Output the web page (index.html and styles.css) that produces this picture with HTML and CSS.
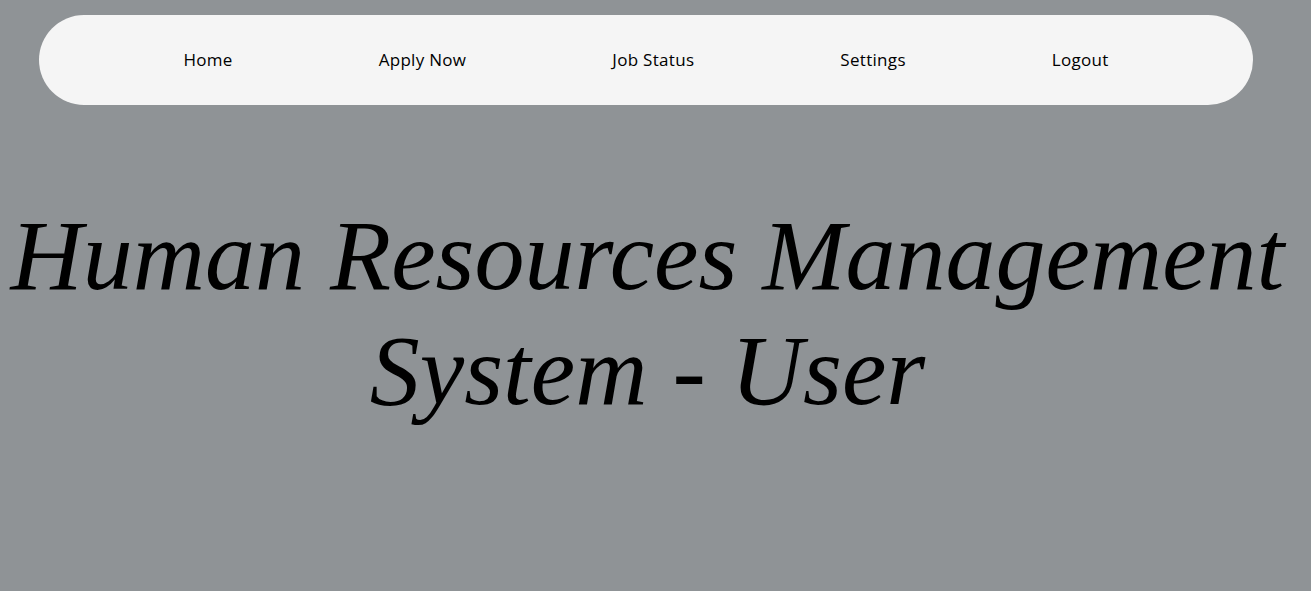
FILE: index.html
```html
<!DOCTYPE html>
<html lang="en">
<head>
<meta charset="utf-8">
<title>HRMS - User</title>
<link rel="stylesheet" href="styles.css">
</head>
<body>
<nav class="navbar">
  <a class="nav-link" href="#">Home</a>
  <a class="nav-link" href="#">Apply Now</a>
  <a class="nav-link" href="#">Job Status</a>
  <a class="nav-link" href="#">Settings</a>
  <a class="nav-link" href="#">Logout</a>
</nav>
<main class="hero">
  <h1 class="title">Human Resources Management System - User</h1>
</main>
</body>
</html>
```
FILE: styles.css
```css
html, body {
  margin: 0;
  padding: 0;
}
body {
  background: #8f9396;
  min-height: 591px;
}
.navbar {
  box-sizing: border-box;
  margin: 15px 58px 0 39px;
  height: 90px;
  padding-bottom: 2px;
  background: #f5f5f5;
  border-radius: 45px;
  display: flex;
  align-items: center;
  justify-content: center;
  gap: 146px;
}
.nav-link {
  font-family: "Open Sans", "Liberation Sans", sans-serif;
  font-size: 17px;
  letter-spacing: 0.3px;
  color: #000;
  text-decoration: none;
}
.hero {
  padding: 0 16px 0 0;
}
.title {
  margin: 93px 0 0;
  font-family: "Liberation Serif", "Times New Roman", serif;
  font-style: italic;
  font-weight: normal;
  font-size: 100px;
  line-height: 115px;
  text-align: center;
  color: #000;
}
```
